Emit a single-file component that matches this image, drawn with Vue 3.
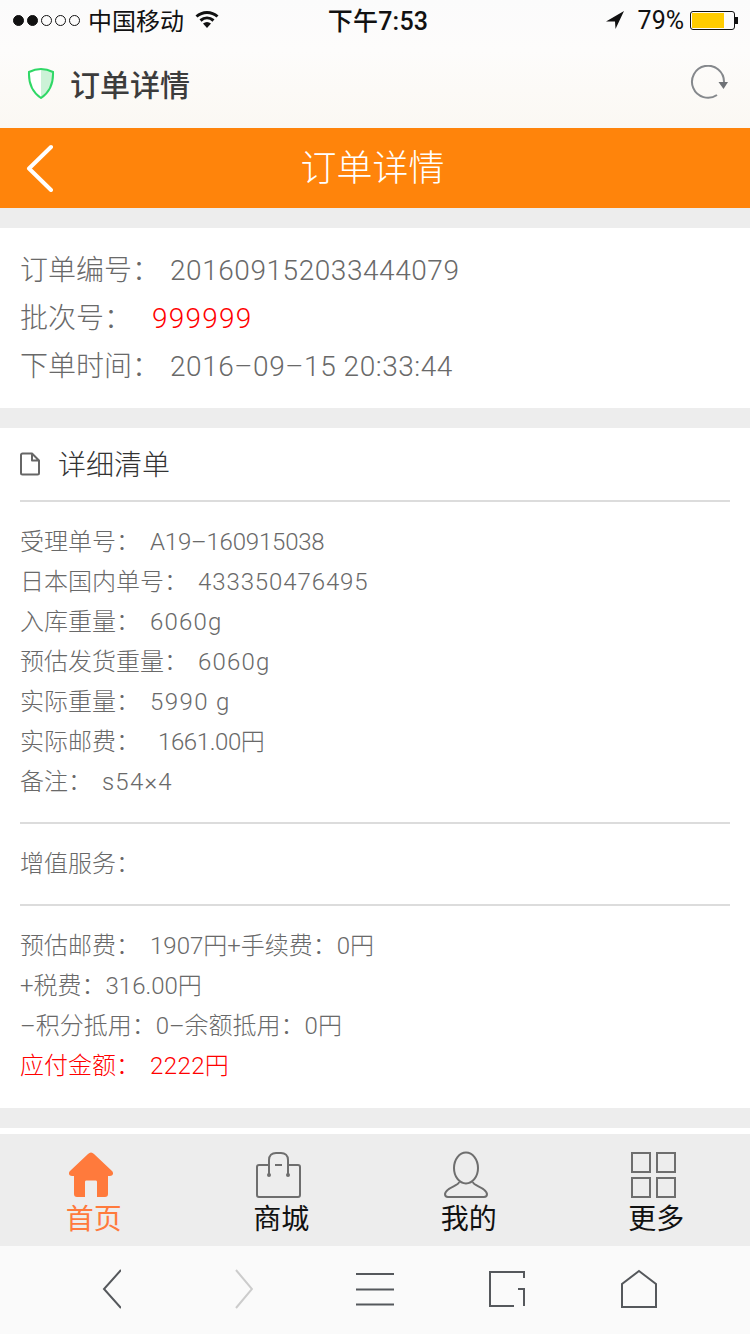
<template>
  <div class="page">
    <div class="chrome-top">
      <div class="statusbar">
        <div class="status-left">
          <span class="signal">
            <i v-for="n in 5" :key="n" :class="{ on: n < 3 }" />
          </span>
          <span class="carrier">中国移动</span>
          <svg class="wifi" width="24" height="18" viewBox="0 0 24 18">
            <path d="M1.500 6.500C7.500 1 16.500 1 22.500 6.500M5.500 10.500C9.500 7 14.500 7 18.500 10.500" fill="none" stroke="#111" stroke-width="3" />
            <path d="M8 13.500C10.500 11.500 13.500 11.500 16 13.500L12 18Z" />
          </svg>
        </div>
        <div class="status-time">下午7:53</div>
        <div class="status-right">
          <svg class="arrow" width="18" height="18" viewBox="0 0 18 18">
            <path d="M18 0L0 10.500L9 10.500L9.500 18Z" />
          </svg>
          <span class="percent">79%</span>
          <span class="battery"><span class="battery-fill" /></span>
          <span class="battery-tip" />
        </div>
      </div>
      <div class="addressbar">
        <svg class="shield" width="28" height="32" viewBox="0 0 28 32">
          <path d="M14 2C10 2 6 3 2 5C1.500 16 5 25 14 31Z" fill="#fff" />
          <path d="M14 2C18 2 22 3 26 5C26.500 16 23 25 14 31Z" fill="#ccf2d7" />
          <path d="M14 2C18 2 22 3 26 5C26.500 16 23 25 14 31C5 25 1.500 16 2 5C6 3 10 2 14 2Z" fill="none" stroke="#2fd866" stroke-width="2" />
        </svg>
        <span class="page-title">订单详情</span>
        <svg class="reload" width="40" height="36" viewBox="0 0 40 36">
          <path d="M35 17A16 16 0 1 0 28 30" fill="none" stroke="#85888c" stroke-width="2" />
          <path d="M29.500 17H39L34.500 24Z" fill="#6f7276" />
        </svg>
      </div>
    </div>

    <header class="navbar">
      <svg class="nav-back" width="30" height="48" viewBox="0 0 30 48">
        <path d="M26 3L4 24.500L26 46" fill="none" stroke="#fff" stroke-width="4" stroke-linecap="round" stroke-linejoin="round" />
      </svg>
      <h1 class="nav-title">订单详情</h1>
    </header>

    <section class="card order">
      <p class="order-row"><span class="order-label">订单编号：</span><span>201609152033444079</span></p>
      <p class="order-row"><span class="order-label order-label--batch">批次号：</span><span class="red batch">999999</span></p>
      <p class="order-row"><span class="order-label">下单时间：</span><span>2016–09–15 20:33:44</span></p>
    </section>

    <section class="card detail">
      <div class="detail-head">
        <svg width="20" height="24" viewBox="0 0 20 24">
          <path d="M2.500 1.500H12L19 8.500V21A1.500 1.500 0 0 1 17.500 22.500H2.500A1.500 1.500 0 0 1 1 21V3A1.500 1.500 0 0 1 2.500 1.500Z M12 1.500V8.500H19" fill="none" stroke="#666" stroke-width="2" stroke-linejoin="round" />
        </svg>
        <h2>详细清单</h2>
      </div>
      <div class="block">
        <p v-for="row in rows" :key="row.label" class="line">
          <span>{{ row.label }}：</span><span :style="{ marginLeft: row.gap + 'px', letterSpacing: row.ls + 'px' }">{{ row.value }}</span>
        </p>
      </div>
      <div class="block">
        <p class="line">增值服务：</p>
      </div>
      <div class="block block--fees">
        <p class="line">预估邮费：<span class="ml10">1907円+手续费：0円</span></p>
        <p class="line">+税费：316.00円</p>
        <p class="line">–积分抵用：0–余额抵用：0円</p>
        <p class="line red">应付金额：<span class="ml10 due">2222円</span></p>
      </div>
    </section>

    <div class="spacer" />

    <nav class="tabbar">
      <div v-for="tab in tabs" :key="tab.name" class="tab" :class="{ active: tab.active }">
        <svg width="50" height="48" viewBox="0 0 50 48" v-html="tab.icon" />
        <span>{{ tab.name }}</span>
      </div>
    </nav>

    <div class="toolbar">
      <svg width="20" height="42" viewBox="0 0 20 42"><path d="M20 2L3 21L20 40" class="tool" /></svg>
      <svg width="20" height="42" viewBox="0 0 20 42"><path d="M3 2L19 21L3 40" class="tool tool--off" /></svg>
      <svg width="40" height="34" viewBox="0 0 40 34"><path d="M1 2H39M1 17.500H39M1 32.500H39" class="tool" /></svg>
      <svg width="38" height="38" viewBox="0 0 38 38"><path d="M26 36H2V2H36V8M30 19H36V36" class="tool" /></svg>
      <svg width="38" height="40" viewBox="0 0 38 40"><path d="M19 2L36 15V38H2V15Z" class="tool" /></svg>
    </div>
  </div>
</template>

<script setup>
const rows = [
  { label: '受理单号', value: 'A19–160915038', gap: 10, ls: -0.2 },
  { label: '日本国内单号', value: '433350476495', gap: 10, ls: 0.9 },
  { label: '入库重量', value: '6060g', gap: 10, ls: 1.2 },
  { label: '预估发货重量', value: '6060g', gap: 10, ls: 1.2 },
  { label: '实际重量', value: '5990 g', gap: 10, ls: 1.4 },
  { label: '实际邮费', value: '1661.00円', gap: 18, ls: -0.4 },
  { label: '备注', value: 's54×4', gap: 10, ls: 1.2 }
]

const line = 'fill="none" stroke="#6e6e6e" stroke-width="2"'

const tabs = [
  {
    name: '首页',
    active: true,
    icon: '<path d="M25 1.500C26 1.500 27 2 28 3L46 20C48 22 47 25 44 25H42V43C42 45 41 46 39 46H31V31C31 30 30.500 29.500 29.500 29.500H20.500C19.500 29.500 19 30 19 31V46H11C9 46 8 45 8 43V25H6C3 25 2 22 4 20L22 3C23 2 24 1.500 25 1.500Z" fill="#ff7a3c"/>'
  },
  {
    name: '商城',
    active: false,
    icon: `<path d="M15 14H5C3.500 14 3 14.500 3 16V44C3 45.500 3.500 46 5 46H44C45.500 46 46 45.500 46 44V16C46 14.500 45.500 14 44 14H34" ${line}/><path d="M15 24V9C15 4.500 18 2 22 2H27C31 2 34 4.500 34 9V24" ${line}/><path d="M21 14H28" ${line}/><circle cx="15" cy="24" r="2" fill="#6e6e6e"/><circle cx="34" cy="24" r="2" fill="#6e6e6e"/>`
  },
  {
    name: '我的',
    active: false,
    icon: `<ellipse cx="25" cy="17" rx="12" ry="15.500" ${line}/><path d="M18 31C18 35 5 36 4 43C4 45 5 46 7 46H43C45 46 46 45 46 43C45 36 32 35 32 31" ${line}/>`
  },
  {
    name: '更多',
    active: false,
    icon: `<rect x="3" y="2" width="18" height="19" ${line}/><rect x="28" y="2" width="18" height="19" ${line}/><rect x="3" y="27" width="18" height="19" ${line}/><rect x="28" y="27" width="18" height="19" ${line}/>`
  }
]
</script>

<style scoped>
.page {
  width: 750px;
  height: 1334px;
  display: flex;
  flex-direction: column;
  overflow: hidden;
  background: #ededed;
  color: #666;
  font-family: Roboto, "Noto Sans CJK SC", sans-serif;
}
p, h1, h2 { margin: 0; font-weight: 400; }
.red { color: #ff0000; }

.chrome-top {
  height: 128px;
  background: linear-gradient(#fbfbfb, #fdfcfb 40%, #fbf8f3);
}
.statusbar {
  height: 40px;
  display: grid;
  grid-template-columns: 1fr auto 1fr;
  align-items: center;
  color: #111;
  font-size: 24px;
}
.status-left { display: flex; align-items: center; padding-left: 13px; }
.signal { display: flex; gap: 3px; margin-right: 8px; }
.signal i {
  width: 11px;
  height: 11px;
  box-sizing: border-box;
  border: 1px solid #111;
  border-radius: 50%;
}
.signal i.on { background: #111; }
.carrier { margin-top: -2px; }
.wifi { margin: -2px 0 0 11px; fill: #111; }
.status-time { font-weight: 500; font-size: 25px; padding-left: 6px; margin-top: -2px; letter-spacing: .2px; }
.status-right { display: flex; align-items: center; justify-content: flex-end; padding-right: 12px; }
.arrow { fill: #111; margin-right: 14px; margin-left: -2px; }
.percent { font-size: 25px; margin-right: 6px; }
.battery {
  width: 45px;
  height: 19px;
  box-sizing: border-box;
  border: 1px solid #111;
  border-radius: 3px;
  padding: 1px;
}
.battery-fill { display: block; width: 32px; height: 15px; background: #ffcc00; }
.battery-tip { width: 3px; height: 7px; background: #111; }

.addressbar {
  height: 88px;
  display: flex;
  align-items: center;
  padding: 0 0 3px 27px;
  box-sizing: border-box;
}
.page-title {
  margin-left: 15px;
  font-size: 30px;
  font-weight: 500;
  color: #3c3c3c;
}
.reload { margin-left: auto; margin-right: 21px; }

.navbar {
  position: relative;
  height: 80px;
  flex: none;
  background: #ff840b;
  display: flex;
  align-items: center;
  justify-content: center;
}
.nav-back { position: absolute; left: 25px; top: 16px; }
.nav-title { font-size: 36px; color: #fff; font-weight: 300; padding: 0 5px 6px 0; }

.card { background: #fff; margin-top: 20px; flex: none; }
.order {
  height: 180px;
  box-sizing: border-box;
  padding: 19px 20px 0;
  font-size: 28px;
  color: #696969;
}
.order-row {
  height: 48px;
  line-height: 48px;
  display: flex;
  font-weight: 300;
  letter-spacing: .55px;
}
.order-label { width: 150px; letter-spacing: 0; }
.order-label--batch { width: 132px; }
.batch { letter-spacing: 1.2px; }

.detail { height: 680px; padding: 0 20px; box-sizing: border-box; }
.detail-head {
  height: 72px;
  display: flex;
  align-items: center;
  gap: 18px;
  border-bottom: 2px solid #dcdcdc;
}
.detail-head h2 { font-size: 28px; color: #333; font-weight: 300; padding-bottom: 2px; }
.block { padding: 20px 0; border-bottom: 2px solid #dcdcdc; }
.block--fees { border-bottom: 0; }
.line {
  height: 40px;
  line-height: 40px;
  font-size: 24px;
  font-weight: 300;
  color: #696969;
  white-space: pre;
}
.line.red { color: #ff0000; }
.ml10 { margin-left: 10px; }
.due { letter-spacing: .4px; }

.spacer { height: 26px; flex: none; background: linear-gradient(#ededed 20px, #fff 20px); }

.tabbar {
  height: 112px;
  flex: none;
  display: grid;
  grid-template-columns: repeat(4, 1fr);
  background: #ededed;
}
.tab {
  display: flex;
  flex-direction: column;
  align-items: center;
  padding-top: 17px;
  color: #111;
  font-size: 28px;
  line-height: 36px;
  font-weight: 400;
}
.tab svg { margin-right: 5px; }
.tab span { margin-top: 3px; }
.tab.active { color: #ff7a3c; }

.toolbar {
  flex: 1;
  background: #fafafa;
  display: grid;
  grid-template-columns: repeat(5, 132px);
  justify-items: center;
  align-items: center;
  padding: 0 0 2px 45px;
}
.tool { fill: none; stroke: #55585c; stroke-width: 2; }
.tool--off { stroke: #ccc; }
</style>
